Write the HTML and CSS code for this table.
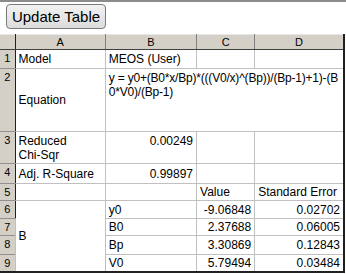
FILE: index.html
```html
<!DOCTYPE html>
<html lang="en">
<head>
    <meta charset="UTF-8">
    <title>Fit Results</title>
    <link rel="stylesheet" href="styles.css">
</head>
<body>

<div class="toolbar">
    <button type="button" class="update-btn">Update Table</button>
</div>

<!-- results sheet -->
<table class="sheet">
    <colgroup>
        <col class="c-row">
        <col class="c-a">
        <col class="c-b">
        <col class="c-c">
        <col class="c-d">
    </colgroup>
    <tr class="head">
        <th class="corner"></th>
        <th>A</th>
        <th>B</th>
        <th>C</th>
        <th>D</th>
    </tr>
    <tr class="r1">
        <th class="num">1</th>
        <td>Model</td>
        <td>MEOS (User)</td>
        <td></td>
        <td></td>
    </tr>
    <tr class="r2">
        <th class="num">2</th>
        <td>Equation</td>
        <td colspan="3" class="top eq">y = y0+(B0*x/Bp)*(((V0/x)^(Bp))/(Bp-1)+1)-(B0*V0)/(Bp-1)</td>
    </tr>
    <tr class="r3">
        <th class="num">3</th>
        <td>Reduced<br>Chi-Sqr</td>
        <td class="top num-val">0.00249</td>
        <td></td>
        <td></td>
    </tr>
    <tr class="r4">
        <th class="num">4</th>
        <td>Adj. R-Square</td>
        <td class="num-val">0.99897</td>
        <td></td>
        <td></td>
    </tr>
    <tr class="r5">
        <th class="num">5</th>
        <td></td>
        <td></td>
        <td>Value</td>
        <td>Standard Error</td>
    </tr>
    <tr class="r6">
        <th class="num">6</th>
        <td rowspan="4">B</td>
        <td>y0</td>
        <td class="num-val">-9.06848</td>
        <td class="num-val">0.02702</td>
    </tr>
    <tr class="r7">
        <th class="num">7</th>
        <td>B0</td>
        <td class="num-val">2.37688</td>
        <td class="num-val">0.06005</td>
    </tr>
    <tr class="r8">
        <th class="num">8</th>
        <td>Bp</td>
        <td class="num-val">3.30869</td>
        <td class="num-val">0.12843</td>
    </tr>
    <tr class="r9">
        <th class="num">9</th>
        <td>V0</td>
        <td class="num-val">5.79494</td>
        <td class="num-val">0.03484</td>
    </tr>
</table>

</body>
</html>
```

FILE: styles.css
```css
body {
    margin: 0;
    background-color: #fff;
    font-family: "Liberation Sans", Arial, sans-serif;
    font-size: 12px;
    color: #000;
    border-top: 2px solid #8c8c8c;
}
.toolbar {
    padding: 2px 0 0 6px;
    height: 30px;
}
.update-btn {
    width: 100px;
    height: 25px;
    padding: 0;
    font-family: "Liberation Sans", Arial, sans-serif;
    font-size: 15px;
    color: #000;
    background: linear-gradient(#f2f2f2, #dcdcdc);
    border: 1px solid #7a7a7a;
    border-radius: 4px;
}
.sheet {
    border-collapse: collapse;
    table-layout: fixed;
    width: 345px;
    border-right: 2px solid #202020;
    border-bottom: 2px solid #202020;
}
.c-row { width: 15px; }
.c-a { width: 90px; }
.c-b { width: 91px; }
.c-c { width: 58px; }
.c-d { width: 89px; }
th {
    background-color: #d4d0c8;
    font-weight: normal;
    font-size: 11px;
    padding: 0;
}
.head th {
    height: 14px;
    border-right: 1px solid #808080;
    border-bottom: 1px solid #404040;
    border-top: 1px solid #e8e8e8;
}
.head th.corner {
    border-right: 1px solid #202020;
}
th.num {
    vertical-align: top;
    text-align: center;
    padding-top: 2px;
    border-right: 1px solid #202020;
    border-bottom: 1px solid #909090;
}
td {
    border: 1px solid #c0c0c0;
    padding: 0 3px;
    vertical-align: middle;
    line-height: 14px;
    overflow: hidden;
}
td.top {
    vertical-align: top;
    padding-top: 2px;
}
td.num-val {
    text-align: right;
}
td.eq {
    word-break: break-all;
    letter-spacing: -0.2px;
}
.r1 { height: 19px; }
.r2 { height: 63px; }
.r3 { height: 32px; }
.r4 { height: 20px; }
.r5 { height: 17px; }
.r6 { height: 18px; }
.r7 { height: 17px; }
.r8 { height: 19px; }
.r9 { height: 17px; }
```
